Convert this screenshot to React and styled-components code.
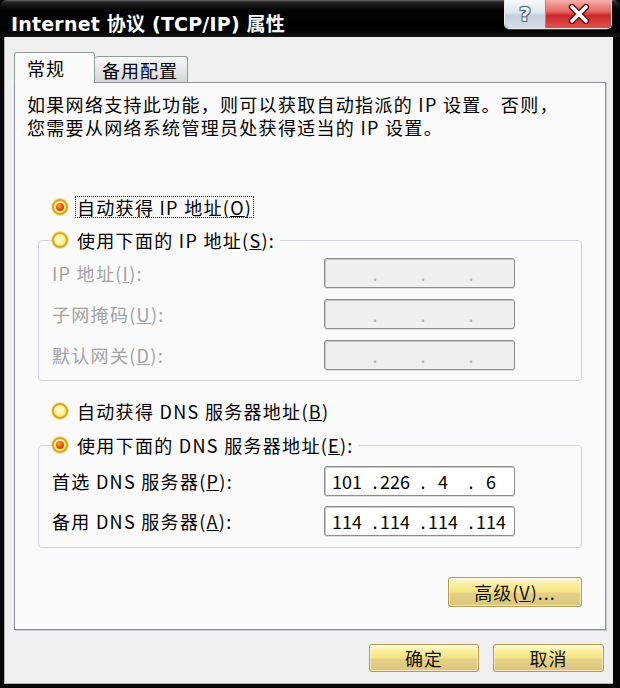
import React from 'react';
import styled, { createGlobalStyle } from 'styled-components';

const GlobalStyle = createGlobalStyle`
  html, body {
    margin: 0;
    padding: 0;
    background: #000;
  }
  body {
    font-family: "Noto Sans CJK SC", "Noto Sans", sans-serif;
  }
  * {
    box-sizing: border-box;
  }
`;

function Key({ children }) {
  return <u>{children}</u>;
}

function Radio({ checked, focused, children }) {
  return (
    <RadioRow>
      <RadioDot $checked={checked} />
      <RadioText $focused={focused}>{children}</RadioText>
    </RadioRow>
  );
}

function IpField({ values, disabled }) {
  const parts = values || ['', '', '', ''];
  return (
    <IpBox $disabled={disabled}>
      {parts.map((v, i) => (
        <React.Fragment key={i}>
          {i > 0 && <IpDot>.</IpDot>}
          <IpSeg>{v}</IpSeg>
        </React.Fragment>
      ))}
    </IpBox>
  );
}

function CloseIcon() {
  return (
    <svg width="26" height="20" viewBox="0 0 26 20">
      <path d="M6 3 L20 17 M20 3 L6 17" stroke="#6b1010" strokeWidth="6.5" strokeLinecap="round" />
      <path d="M6 3 L20 17 M20 3 L6 17" stroke="#fff" strokeWidth="3.6" strokeLinecap="round" />
    </svg>
  );
}

function App() {
  return (
    <>
      <GlobalStyle />
      <Window>
        <TitleBar>
          <Title>Internet 协议 (TCP/IP) 属性</Title>
          <Controls>
            <HelpBtn>?</HelpBtn>
            <CloseBtn>
              <CloseIcon />
            </CloseBtn>
          </Controls>
        </TitleBar>
        <Body>
          <TabList>
            <Tab $active>常规</Tab>
            <Tab>备用配置</Tab>
          </TabList>
          <Panel>
            <Intro>
              <IntroLine>如果网络支持此功能，则可以获取自动指派的 IP 设置。否则，</IntroLine>
              <IntroLine>您需要从网络系统管理员处获得适当的 IP 设置。</IntroLine>
            </Intro>

            <Spacer $h={57} />
            <Radio checked focused>
              自动获得 IP 地址(<Key>O</Key>)
            </Radio>

            <Group $mt={11} $pt={7} $pb={10} $gap={11}>
              <Legend>
                <Radio>
                  使用下面的 IP 地址(<Key>S</Key>):
                </Radio>
              </Legend>
              {IP_ROWS.map(row => (
                <FieldRow key={row.id}>
                  <FieldLabel $disabled>{row.label}</FieldLabel>
                  <IpField disabled />
                </FieldRow>
              ))}
            </Group>

            <Spacer $h={19} />
            <Radio>
              自动获得 DNS 服务器地址(<Key>B</Key>)
            </Radio>

            <Group $mt={12} $pt={10} $pb={11} $gap={10}>
              <Legend>
                <Radio checked>
                  使用下面的 DNS 服务器地址(<Key>E</Key>):
                </Radio>
              </Legend>
              {DNS_ROWS.map(row => (
                <FieldRow key={row.id}>
                  <FieldLabel>{row.label}</FieldLabel>
                  <IpField values={row.values} />
                </FieldRow>
              ))}
            </Group>

            <AdvancedRow>
              <Button $w={134} $h={30}>
                高级(<Key>V</Key>)...
              </Button>
            </AdvancedRow>
          </Panel>
          <Footer>
            <Button $w={110} $h={28}>
              确定
            </Button>
            <Button $w={111} $h={28}>
              取消
            </Button>
          </Footer>
        </Body>
      </Window>
    </>
  );
}

const Window = styled.div`
  width: 620px;
  height: 688px;
  display: flex;
  flex-direction: column;
  background: #060606;
  border-radius: 7px 7px 0 0;
  overflow: hidden;
`;

const TitleBar = styled.div`
  height: 37px;
  flex: none;
  display: flex;
  justify-content: space-between;
  align-items: flex-start;
  padding: 0 8px 0 11px;
  background: linear-gradient(
    #6a6a6a 0,
    #262626 2px,
    #050505 9px,
    #000 30px,
    #161616 100%
  );
`;

const Title = styled.div`
  margin-top: 13px;
  color: #fff;
  font-family: "DejaVu Sans", "Noto Sans CJK SC", sans-serif;
  font-weight: bold;
  font-size: 19px;
  line-height: 22px;
  text-shadow: 1px 1px 0 #000;
  letter-spacing: 0.2px;
`;

const Controls = styled.div`
  display: flex;
  height: 29px;
  border: 1px solid #e8e8e8;
  border-top: none;
  border-radius: 0 0 5px 5px;
  overflow: hidden;
  box-shadow: 0 1px 0 #444;
`;

const HelpBtn = styled.div`
  width: 41px;
  display: flex;
  align-items: center;
  justify-content: center;
  background: linear-gradient(#f6f8fb 0%, #dfe6ee 45%, #c3cfdb 55%, #d6dee8 100%);
  color: #eef2f7;
  font-family: "DejaVu Sans", sans-serif;
  font-weight: bold;
  font-size: 20px;
  text-shadow: -1px -1px 0 #5b6475, 1px -1px 0 #5b6475, -1px 1px 0 #5b6475,
    1px 1px 0 #5b6475;
  border-right: 1px solid #8a8f99;
`;

const CloseBtn = styled.div`
  width: 65px;
  display: flex;
  align-items: center;
  justify-content: center;
  background: linear-gradient(#f6b0ac 0%, #e66a66 40%, #cc2a2a 55%, #e05050 100%);
`;

const Body = styled.div`
  flex: 1;
  margin: 0 7px 4px 4px;
  padding: 15px 7px 0 10px;
  background: #f0f0f0;
  box-shadow: inset 1px 0 0 #b4b4b4, inset 0 -1px 0 #b4b4b4;
`;

const TabList = styled.div`
  display: flex;
  align-items: flex-end;
  height: 30px;
`;

const Tab = styled.div`
  position: relative;
  z-index: ${p => (p.$active ? 1 : 0)};
  height: ${p => (p.$active ? '31px' : '26px')};
  margin-bottom: ${p => (p.$active ? '-1px' : '0')};
  padding: ${p => (p.$active ? '3px 29px 0 12px' : '1px 9px 0 7px')};
  border: 1px solid #919b9c;
  border-bottom: none;
  border-left: ${p => (p.$active ? '1px solid #919b9c' : 'none')};
  border-radius: 3px 3px 0 0;
  background: ${p =>
    p.$active ? '#fafafa' : 'linear-gradient(#f8f8f8, #e4e4e6 60%, #d6d6d9)'};
  font-size: 18px;
  line-height: 24px;
  letter-spacing: 1px;
  color: #000;
`;

const Panel = styled.div`
  height: 548px;
  padding: 10px 23px 0 23px;
  background: #fafafa;
  border: 1px solid #8f9199;
  box-shadow: 1px 1px 0 #c9cad0;
`;

const Intro = styled.div`
  margin: 0 0 0 -11px;
  display: flex;
  flex-direction: column;
`;

const IntroLine = styled.span`
  height: 23px;
  font-size: 18px;
  line-height: 23px;
  letter-spacing: 1.3px;
  color: #000;
  white-space: nowrap;
`;

const Spacer = styled.div`
  height: ${p => p.$h}px;
`;

const RadioRow = styled.div`
  display: flex;
  align-items: center;
  gap: 8px;
  height: 22px;
  padding-left: 14px;
`;

const RadioDot = styled.span`
  flex: none;
  width: 16px;
  height: 16px;
  border-radius: 50%;
  display: inline-flex;
  align-items: center;
  justify-content: center;
  border: 2px solid #d6a913;
  background: radial-gradient(circle at 45% 40%, #fffce6 0%, #fff19a 50%, #f6d54a 100%);
  box-shadow: 0 0 0 1px rgba(200, 160, 40, 0.35);

  &::after {
    content: '';
    display: ${p => (p.$checked ? 'block' : 'none')};
    width: 8px;
    height: 8px;
    border-radius: 50%;
    background: radial-gradient(circle at 40% 35%, #ff9b45 0%, #dc4a05 60%, #9c2c00 100%);
  }
`;

const RadioText = styled.span`
  font-size: 18px;
  line-height: 20px;
  letter-spacing: 1.3px;
  color: #000;
  white-space: nowrap;
  padding: 0 1px;
  outline: ${p => (p.$focused ? '1px dotted #222' : 'none')};
  outline-offset: 0;
`;

const Group = styled.fieldset`
  margin: ${p => p.$mt}px 0 0 0;
  padding: ${p => p.$pt}px 0 ${p => p.$pb}px 13px;
  border: 1px solid #d3d4dc;
  border-radius: 4px;
  display: flex;
  flex-direction: column;
  gap: ${p => p.$gap}px;
  min-width: 0;
`;

const Legend = styled.legend`
  margin-left: 0;
  padding: 0 4px 0 0;
  background: #fafafa;

  & > div {
    padding-left: 0;
  }
`;

const FieldRow = styled.div`
  display: grid;
  grid-template-columns: 272px 191px;
  align-items: center;
  height: 30px;
`;

const FieldLabel = styled.span`
  font-size: 18px;
  letter-spacing: 1.3px;
  white-space: nowrap;
  color: ${p => (p.$disabled ? '#a3a3a3' : '#000')};
`;

const IpBox = styled.div`
  width: 191px;
  height: 30px;
  display: flex;
  align-items: center;
  padding-left: 6px;
  overflow: hidden;
  border: 1px solid #8d8d8d;
  border-radius: 3px;
  box-shadow: inset 1px 1px 0 #c8c8c8, 0 1px 0 #e0e0e0;
  background: ${p => (p.$disabled ? '#efefef' : '#fff')};
  color: ${p => (p.$disabled ? '#b0b0b0' : '#000')};
  font-size: 18px;
  line-height: 28px;
`;

const IpSeg = styled.span`
  flex: none;
  width: 40px;
  padding-right: 8px;
  text-align: center;
`;

const IpDot = styled.span`
  flex: none;
  width: 8px;
  text-align: center;
`;

const AdvancedRow = styled.div`
  display: flex;
  justify-content: flex-end;
  margin-top: 29px;
`;

const Button = styled.button`
  width: ${p => p.$w}px;
  height: ${p => p.$h}px;
  padding: 0;
  font-family: inherit;
  font-size: 18px;
  letter-spacing: 1px;
  color: #111;
  border: 1px solid #b39a4c;
  border-radius: 3px;
  background: linear-gradient(
    #fffce8 0%,
    #faf1a6 18%,
    #f3e384 48%,
    #e4d085 56%,
    #dcc681 100%
  );
  box-shadow: inset 0 0 0 1px rgba(255, 255, 240, 0.6);
`;

const Footer = styled.div`
  display: flex;
  justify-content: flex-end;
  gap: 14px;
  margin-top: 14px;
  padding-right: 2px;
`;

const IP_ROWS = [
  { id: 1, label: <>IP 地址(<Key>I</Key>):</> },
  { id: 2, label: <>子网掩码(<Key>U</Key>):</> },
  { id: 3, label: <>默认网关(<Key>D</Key>):</> },
];

const DNS_ROWS = [
  { id: 1, label: <>首选 DNS 服务器(<Key>P</Key>):</>, values: ['101', '226', '4', '6'] },
  { id: 2, label: <>备用 DNS 服务器(<Key>A</Key>):</>, values: ['114', '114', '114', '114'] },
];

export default App;
